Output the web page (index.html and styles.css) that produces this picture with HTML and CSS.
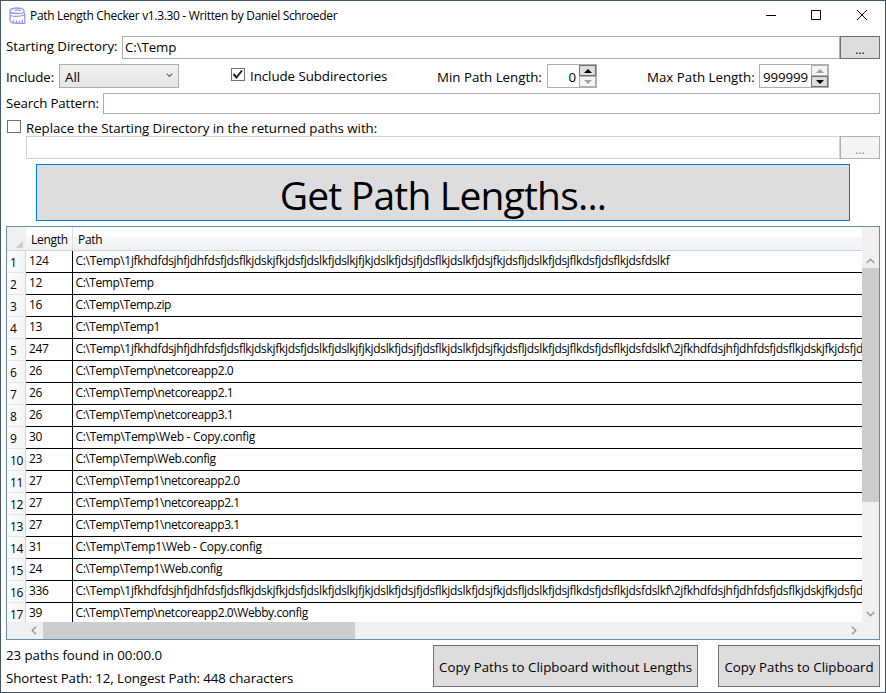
FILE: index.html
```
<!DOCTYPE html>
<html lang="en">
<head>
<meta charset="utf-8">
<title>Path Length Checker</title>
<link rel="stylesheet" href="styles.css">
</head>
<body>
<div class="window">
  <header class="titlebar">
    <svg class="app-icon" width="18" height="18" viewBox="0 0 18 18" fill="none" stroke="#9298f4" stroke-width="1.3">
      <path d="M2.500 1.800Q8 .4 13 1.500Q15.500 2.500 15 5.500Q9 7.500 1.500 5.500Q0 3.500 2.500 1.800ZM5.500 3.500Q9 2.300 12 3.500M1 5.500V13.500Q2 16.300 8 16.300H15.800V7.500L14.500 5M1 8.500Q8 10.500 15.500 8M4.500 13V15.500M7.500 13.500V16M10.500 13.500V16M13.300 12.500V16"/>
    </svg>
    <h1 class="title"><span>Path Length Checker v1.3.30 - Written by Daniel Schroeder</span></h1>
    <svg class="controls" width="102" height="12" viewBox="0 0 102 12" fill="none" stroke="#000">
      <path d="M0 5.500H10M45.500 .5H54.500V9.500H45.500ZM91 0L101 10M101 0L91 10"/>
    </svg>
  </header>

  <div class="row row-dir">
    <label class="label w-dir"><span>Starting Directory:</span></label>
    <div class="field text">C:\Temp</div>
    <button class="btn browse">...</button>
  </div>

  <div class="row row-options">
    <span class="label w-include"><span>Include:</span></span>
    <div class="select"><span>All</span><svg width="7" height="5" viewBox="0 0 7 5" fill="none" stroke="#606060" stroke-width="1.1"><path d="M.7 .7L3.500 3.500L6.300 .7"/></svg></div>
    <div class="check-wrap"><span class="checkbox"><svg width="12" height="11" viewBox="0 0 12 11" fill="none" stroke="#212121" stroke-width="2"><path d="M1.500 5L4.500 8.500L10 1.500"/></svg></span><span class="w-sub">Include Subdirectories</span></div>
    <span class="label min-label"><span>Min Path Length:</span></span>
    <div class="spinner min"><span class="num">0</span><span class="steps"><i class="step up on"></i><i class="step down"></i></span></div>
    <span class="label max-label"><span>Max Path Length:</span></span>
    <div class="spinner max"><span class="num">999999</span><span class="steps"><i class="step up"></i><i class="step down on"></i></span></div>
  </div>

  <div class="row row-search">
    <label class="label w-search"><span>Search Pattern:</span></label>
    <div class="field"></div>
  </div>

  <div class="replace-line"><span class="checkbox"></span><span class="w-replace">Replace the Starting Directory in the returned paths with:</span></div>
  <div class="row row-replace">
    <div class="field disabled"></div>
    <button class="btn browse disabled">...</button>
  </div>

  <button class="btn main-btn"><span>Get Path Lengths...</span></button>

  <div class="grid">
    <div class="viewport">
      <div class="head"><span class="corner"></span><span class="h-len"><span>Length</span></span><span class="h-path"><span>Path</span></span></div>
      <div class="rows" id="rows"></div>
    </div>
    <div class="vbar">
      <svg class="arrow" width="9" height="6" viewBox="0 0 9 6"><path d="M.7 5L4.500 1.200L8.300 5"/></svg>
      <div class="vthumb"></div>
      <svg class="arrow end" width="9" height="6" viewBox="0 0 9 6"><path d="M.7 1L4.500 4.800L8.300 1"/></svg>
    </div>
    <div class="hbar">
      <svg class="arrow" width="6" height="9" viewBox="0 0 6 9"><path d="M5 .7L1.200 4.500L5 8.300"/></svg>
      <div class="hthumb"></div>
      <svg class="arrow end" width="6" height="9" viewBox="0 0 6 9"><path d="M1 .7L4.800 4.500L1 8.300"/></svg>
    </div>
  </div>

  <footer class="footer">
    <div class="status"><div class="w-found">23 paths found in 00:00.0</div><div class="w-short">Shortest Path: 12, Longest Path: 448 characters</div></div>
    <button class="btn copy1"><span>Copy Paths to Clipboard without Lengths</span></button>
    <button class="btn copy2"><span>Copy Paths to Clipboard</span></button>
  </footer>
</div>
<script src="app.js"></script>
</body>
</html>
```
FILE: styles.css
```
* { box-sizing: border-box; }
body { margin: 0; font-family: "Open Sans", "Noto Sans", sans-serif; font-size: 13.3px; color: #000; background: #fff; }
.window { width: 886px; height: 693px; border: 1px solid #43566b; background: #fff; overflow: hidden; white-space: nowrap; display: flex; flex-direction: column; }
.titlebar { height: 35px; flex: none; display: flex; align-items: flex-start; padding: 6px 0 0 8px; }
.title { margin: 0 0 0 3px; font-size: 12px; font-weight: 400; line-height: 18px; width: 736px; letter-spacing: -.33px; }
.controls { margin-top: 3px; }
.row { display: flex; flex: none; }
.label { flex: none; letter-spacing: -.05px; line-height: 21px; }
.field { flex: 1; border: 1px solid #abadb3; min-width: 0; }
.text { line-height: 21px; padding-left: 2px; letter-spacing: -.1px; }
.btn { background: #ddd; border: 1px solid #707070; font: inherit; color: #000; padding: 0; letter-spacing: 0; white-space: nowrap; }
.browse { width: 40px; flex: none; font-size: 12px; line-height: 18px; padding-top: 4px; }
.row-dir { height: 23px; padding: 0 5px; }
.w-dir { width: 116px; }
.row-options { height: 24px; margin-top: 5px; padding-left: 5px; }
.row-options .label { line-height: 27px; letter-spacing: 0; }
.row-options .w-include { width: 53px; letter-spacing: -.1px; }
.select { width: 120px; height: 24px; border: 1px solid #acacac; background: linear-gradient(#f0f0f0, #e5e5e5); display: flex; justify-content: space-between; align-items: center; padding: 2px 5px 0 5px; }
.select svg { margin-top: -4px; }
.check-wrap { display: flex; margin-left: 52px; width: 206px; }
.checkbox { width: 14px; height: 13px; border: 1px solid #707070; background: #fff; flex: none; }
.check-wrap .checkbox { margin: 4px 5px 0 0; }
.checkbox svg { display: block; }
.w-sub { line-height: 24px; letter-spacing: -.05px; }
.min-label { width: 110px; }
.max-label { width: 112px; margin-left: 50px; }
.spinner { height: 24px; border: 1px solid #abadb3; display: flex; }
.min { width: 50px; }
.max { width: 70px; }
.num { flex: 1; text-align: right; padding-right: 3px; line-height: 25px; letter-spacing: -.1px; }
.steps { width: 17px; display: flex; flex-direction: column; }
.step { height: 11px; border: 1px solid #adb2b5; background: #f4f4f4; display: flex; align-items: center; justify-content: center; }
.step::before { content: ""; border: 4px solid transparent; border-top-width: 0; border-bottom: 4px solid #a0a0a0; }
.step.down::before { border-top: 4px solid #a0a0a0; border-bottom-width: 0; }
.step.on { background: #ddd; border-color: #707070; }
.step.on::before { border-bottom-color: #000; }
.step.down.on::before { border-top-color: #000; }
.row-search { height: 21px; margin-top: 5px; padding: 0 5px; }
.row-search .label { width: 97px; line-height: 20px; letter-spacing: -.15px; }
.replace-line { height: 22px; flex: none; display: flex; padding-left: 6px; }
.replace-line .checkbox { margin: 6px 5px 0 0; }
.w-replace { line-height: 28px; height: 22px; letter-spacing: -.04px; }
.row-replace { height: 23px; padding: 0 5px 0 25px; }
.field.disabled { border-color: #d0d1d4; }
.btn.disabled { background: #f4f4f4; border-color: #adb2b5; color: #838383; }
.main-btn { height: 57px; flex: none; margin: 5px 35px 0; border-color: #0078d7; font-size: 39px; line-height: 50px; padding-top: 5px; letter-spacing: -.8px; }
.grid { margin: 5px 5px 0; height: 414px; flex: none; border: 1px solid #688caf; display: grid; grid-template-columns: 1fr 17px; grid-template-rows: 395px 17px; background: #f0f0f0; }
.viewport { overflow: hidden; background: #fff; min-width: 0; font-size: 12px; letter-spacing: -.3px; }
.head { height: 24px; display: flex; background: linear-gradient(#fff 0 10px, #f7f8fa 10px, #f1f2f4); border-bottom: 1px solid #d5d5d5; line-height: 26px; }
.corner { width: 19px; background: linear-gradient(135deg, transparent 50%, #cfcfcf 50%) 9px 13px / 7px 8px no-repeat, #f0f0f0; }
.h-len { width: 47px; padding-left: 5px; border-right: 1px solid #dedfe1; }
.h-path { padding-left: 5px; }
.line { height: 22px; display: flex; }
.idx { width: 19px; background: linear-gradient(90deg, #fff, #f3f4f6); border-right: 1px solid #d5d5d5; border-bottom: 1px solid #e4e5e8; padding-left: 3px; line-height: 24px; font-size: 12px; height: 22px; }
.line .idx { flex: none; }
.len { width: 47px; flex: none; border-right: 1px solid #000; border-bottom: 1px solid #000; padding-left: 3px; line-height: 20px; }
.path { flex: 1; min-width: 0; border-bottom: 1px solid #000; padding-left: 2.500px; line-height: 20px; overflow: hidden; letter-spacing: -.42px; }
.path.wide { letter-spacing: -.31px; }
.path.copy { letter-spacing: -.28px; }
.arrow { fill: none; stroke: #9b9b9b; stroke-width: 1.500; }
.vbar { display: flex; flex-direction: column; align-items: center; padding: 31px 0 5px; }
.vthumb { width: 17px; height: 234px; background: #cdcdcd; margin-top: 4px; flex: none; }
.vbar .end { margin-top: auto; }
.hbar { display: flex; align-items: center; padding: 0 5px 0 24px; }
.hthumb { width: 312px; height: 17px; background: #cdcdcd; margin-left: 6px; }
.hbar .end { margin-left: auto; }
.footer { display: flex; flex: none; height: 42px; margin: 5px 5px 0; }
.status { width: 427px; letter-spacing: -.1px; line-height: 23px; margin-top: -1px; }
.w-found { letter-spacing: -.05px; }
.copy1 { width: 265px; height: 42px; padding-top: 2px; letter-spacing: .01px; }
.copy2 { width: 162px; height: 42px; margin-left: 20px; padding-top: 2px; }
```
FILE: app.js
```
const long = "1jfkhdfdsjhfjdhfdsfjdsflkjdskjfkjdsfjdslkfjdslkjfjkjdslkfjdsjfjdsflkjdslkfjdsjfkjdsfljdslkfjdsjflkdsfjdsflkjdsfdslkf";
const data = [
  [124, long], [12, "Temp"], [16, "Temp.zip"], [13, "Temp1"],
  [247, long + "\\2jfkhdfdsjhfjdhfdsfjdsflkjdskjfkjdsfjd"],
  [26, "Temp\\netcoreapp2.0"], [26, "Temp\\netcoreapp2.1"], [26, "Temp\\netcoreapp3.1"],
  [30, "Temp\\Web - Copy.config"], [23, "Temp\\Web.config"],
  [27, "Temp1\\netcoreapp2.0"], [27, "Temp1\\netcoreapp2.1"], [27, "Temp1\\netcoreapp3.1"],
  [31, "Temp1\\Web - Copy.config"], [24, "Temp1\\Web.config"],
  [336, long + "\\2jfkhdfdsjhfjdhfdsfjdsflkjdskjfkjdsfjd"],
  [39, "Temp\\netcoreapp2.0\\Webby.config"]
];
const rows = document.getElementById("rows");
data.forEach(([len, path], i) => {
  const line = document.createElement("div");
  line.className = "line";
  const fit = path.startsWith("1") ? "path wide" : path.includes("Copy") ? "path copy" : "path";
  [["idx", i + 1], ["len", len], [fit, "C:\\Temp\\" + path]].forEach(([cls, text]) => {
    const cell = document.createElement("span");
    cell.className = cls;
    cell.textContent = text;
    line.append(cell);
  });
  rows.append(line);
});
```
